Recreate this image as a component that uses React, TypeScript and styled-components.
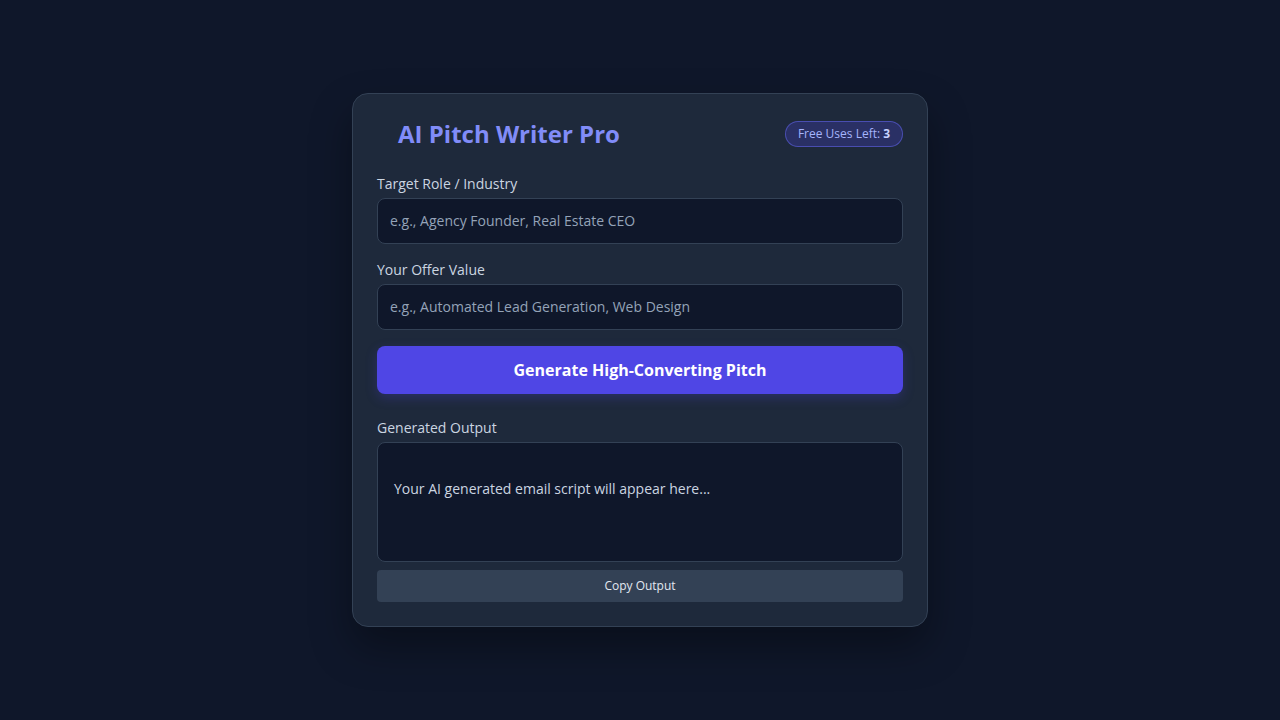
import styled, { createGlobalStyle } from 'styled-components';

const GlobalStyle = createGlobalStyle`
  html, body {
    margin: 0;
    padding: 0;
    background: #0f172a;
    font-family: 'Open Sans', 'Noto Sans', sans-serif;
  }
  * {
    box-sizing: border-box;
  }
`;

export default () => {
  return (
    <>
      <GlobalStyle />
      <Page>
        <Card>
          <Header>
            <Title>AI Pitch Writer Pro</Title>
            <Badge>
              Free Uses Left: <b>3</b>
            </Badge>
          </Header>

          <Field>
            <Label>Target Role / Industry</Label>
            <Input placeholder='e.g., Agency Founder, Real Estate CEO' />
          </Field>

          <Field>
            <Label>Your Offer Value</Label>
            <Input placeholder='e.g., Automated Lead Generation, Web Design' />
          </Field>

          <GenerateButton>Generate High-Converting Pitch</GenerateButton>

          <OutputSection>
            <Label>Generated Output</Label>
            <OutputBox>Your AI generated email script will appear here...</OutputBox>
            <CopyButton>Copy Output</CopyButton>
          </OutputSection>
        </Card>
      </Page>
    </>
  );
};

const Page = styled.div`
  min-height: 720px;
  display: flex;
  justify-content: center;
  padding-top: 93px;
`;

const Card = styled.div`
  width: 576px;
  height: 534px;
  background: #1e293b;
  border: 1px solid #334155;
  border-radius: 16px;
  padding: 24px;
  box-shadow: 0 20px 40px rgba(0, 0, 0, 0.35);
  display: flex;
  flex-direction: column;
`;

const Header = styled.div`
  display: flex;
  align-items: center;
  justify-content: space-between;
  height: 32px;
  margin-bottom: 24px;
`;

const Title = styled.h1`
  margin: 0 0 0 21px;
  font-size: 24px;
  line-height: 32px;
  font-weight: 700;
  color: #818cf8;
`;

const Badge = styled.span`
  height: 26px;
  padding: 0 12px 1px;
  display: inline-flex;
  align-items: center;
  border-radius: 999px;
  background: rgba(79, 70, 229, 0.25);
  border: 1px solid rgba(99, 102, 241, 0.55);
  color: #a5b4fc;
  font-size: 12px;
  b {
    color: #c7d2fe;
    font-weight: 700;
    margin-left: 3px;
  }
`;

const Field = styled.div`
  display: flex;
  flex-direction: column;
  gap: 4px;
  margin-bottom: 16px;
`;

const Label = styled.label`
  font-size: 14px;
  line-height: 20px;
  color: #cbd5e1;
`;

const Input = styled.input`
  height: 46px;
  width: 100%;
  padding: 0 12px 2px;
  background: #0f172a;
  border: 1px solid #334155;
  border-radius: 8px;
  color: #e2e8f0;
  font-family: inherit;
  font-size: 14px;
  outline: none;
  &::placeholder {
    color: #94a3b8;
  }
`;

const GenerateButton = styled.button`
  height: 48px;
  width: 100%;
  border: none;
  border-radius: 8px;
  background: #4f46e5;
  color: #ffffff;
  font-family: inherit;
  font-size: 16px;
  font-weight: 700;
  cursor: pointer;
  box-shadow: 0 4px 12px rgba(79, 70, 229, 0.25);
`;

const OutputSection = styled.div`
  display: flex;
  flex-direction: column;
  margin-top: 24px;
  gap: 4px;
`;

const OutputBox = styled.div`
  height: 120px;
  padding: 36px 16px 16px;
  background: #0f172a;
  border: 1px solid #334155;
  border-radius: 8px;
  color: #cbd5e1;
  font-size: 14px;
  line-height: 20px;
`;

const CopyButton = styled.button`
  margin-top: 4px;
  height: 32px;
  width: 100%;
  padding: 0 0 2px;
  border: none;
  border-radius: 4px;
  background: #334155;
  color: #e2e8f0;
  font-family: inherit;
  font-size: 12px;
  cursor: pointer;
`;
